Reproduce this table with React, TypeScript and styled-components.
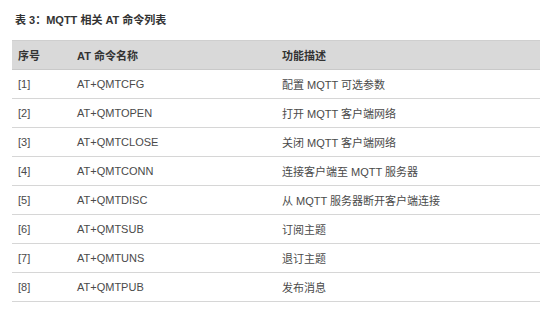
import React from "react";
import styled, { createGlobalStyle } from "styled-components";

const GlobalStyle = createGlobalStyle`
  html, body {
    margin: 0;
    padding: 0;
    background: #ffffff;
  }
  body {
    font-family: "Liberation Sans", Arial, "Noto Sans CJK SC", sans-serif;
  }
`;

const Page = styled.div`
  width: 552px;
  height: 313px;
  padding: 0 12px;
  box-sizing: border-box;
`;

const Caption = styled.div`
  height: 40px;
  display: flex;
  align-items: center;
  padding-left: 3px;
  padding-bottom: 2px;
  box-sizing: border-box;
  font-size: 11px;
  font-weight: bold;
  color: #333333;
`;

const Table = styled.div`
  width: 528px;
  display: flex;
  flex-direction: column;
`;

const Row = styled.div<{ $head?: boolean }>`
  display: grid;
  grid-template-columns: 59px 205px 1fr;
  height: ${({ $head }) => ($head ? "30px" : "29px")};
  align-items: center;
  box-sizing: border-box;
  background: ${({ $head }) => ($head ? "#d9d9d9" : "transparent")};
  border-top: ${({ $head }) => ($head ? "1px solid #cfcfcf" : "none")};
  border-bottom: 1.5px solid ${({ $head }) => ($head ? "#c9c9c9" : "#d6d6d6")};
  font-size: 11px;
  font-weight: ${({ $head }) => ($head ? "bold" : "normal")};
  color: ${({ $head }) => ($head ? "#333333" : "#4a4a4a")};
`;

const Cell = styled.div`
  padding-left: 6px;
  white-space: nowrap;
`;

const rows: [string, string, string][] = [
  ["[1]", "AT+QMTCFG", "配置 MQTT 可选参数"],
  ["[2]", "AT+QMTOPEN", "打开 MQTT 客户端网络"],
  ["[3]", "AT+QMTCLOSE", "关闭 MQTT 客户端网络"],
  ["[4]", "AT+QMTCONN", "连接客户端至 MQTT 服务器"],
  ["[5]", "AT+QMTDISC", "从 MQTT 服务器断开客户端连接"],
  ["[6]", "AT+QMTSUB", "订阅主题"],
  ["[7]", "AT+QMTUNS", "退订主题"],
  ["[8]", "AT+QMTPUB", "发布消息"],
];

export default function App() {
  return (
    <Page>
      <GlobalStyle />
      <Caption>表 3：MQTT 相关 AT 命令列表</Caption>
      <Table>
        <Row $head>
          <Cell>序号</Cell>
          <Cell>AT 命令名称</Cell>
          <Cell>功能描述</Cell>
        </Row>
        {rows.map(([no, cmd, desc]) => (
          <Row key={no}>
            <Cell>{no}</Cell>
            <Cell>{cmd}</Cell>
            <Cell>{desc}</Cell>
          </Row>
        ))}
      </Table>
    </Page>
  );
}
